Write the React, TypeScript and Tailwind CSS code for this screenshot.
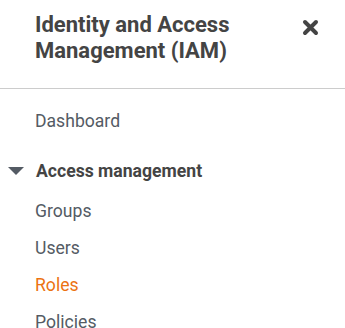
export default function App() {
  const items = [
    { label: 'Groups' },
    { label: 'Users' },
    { label: 'Roles', active: true },
    { label: 'Policies' },
  ];
  return (
    <div className="h-[328px] w-[345px] overflow-hidden bg-white" style={{ fontFamily: 'Roboto, "Liberation Sans", sans-serif' }}>
      <div className="flex items-start justify-between pl-[35px] pr-[26px] pt-[12px]">
        <h1 className="text-[22px] font-bold leading-[26px] text-[#444444]">
          Identity and Access
          <br />
          Management (IAM)
        </h1>
        <button className="mt-[7px] text-[#444444]">
          <svg width="17" height="17" viewBox="0 0 17 17">
            <path d="M3 3L14 14M14 3L3 14" stroke="currentColor" strokeWidth="4" strokeLinecap="round" />
          </svg>
        </button>
      </div>
      <div className="mt-[24px] h-px bg-[#cccccc]" />
      <nav className="pt-[20px] text-[17.6px] text-[#545b64]">
        <a className="block pl-[35px] leading-[24px]">Dashboard</a>
        <div className="mt-[26px] flex items-center leading-[24px]">
          <svg className="ml-[8px] mr-[12px]" width="16" height="8" viewBox="0 0 16 8">
            <path d="M0 0H16L8 8Z" fill="#545b64" />
          </svg>
          <span className="font-bold text-[#444444]">Access management</span>
        </div>
        <ul className="mt-[16px] flex flex-col gap-[13px]">
          {items.map((it) => (
            <li key={it.label} className={'pl-[35px] leading-[24px] ' + (it.active ? 'text-[#ec7211]' : '')}>
              {it.label}
            </li>
          ))}
        </ul>
      </nav>
    </div>
  );
}
